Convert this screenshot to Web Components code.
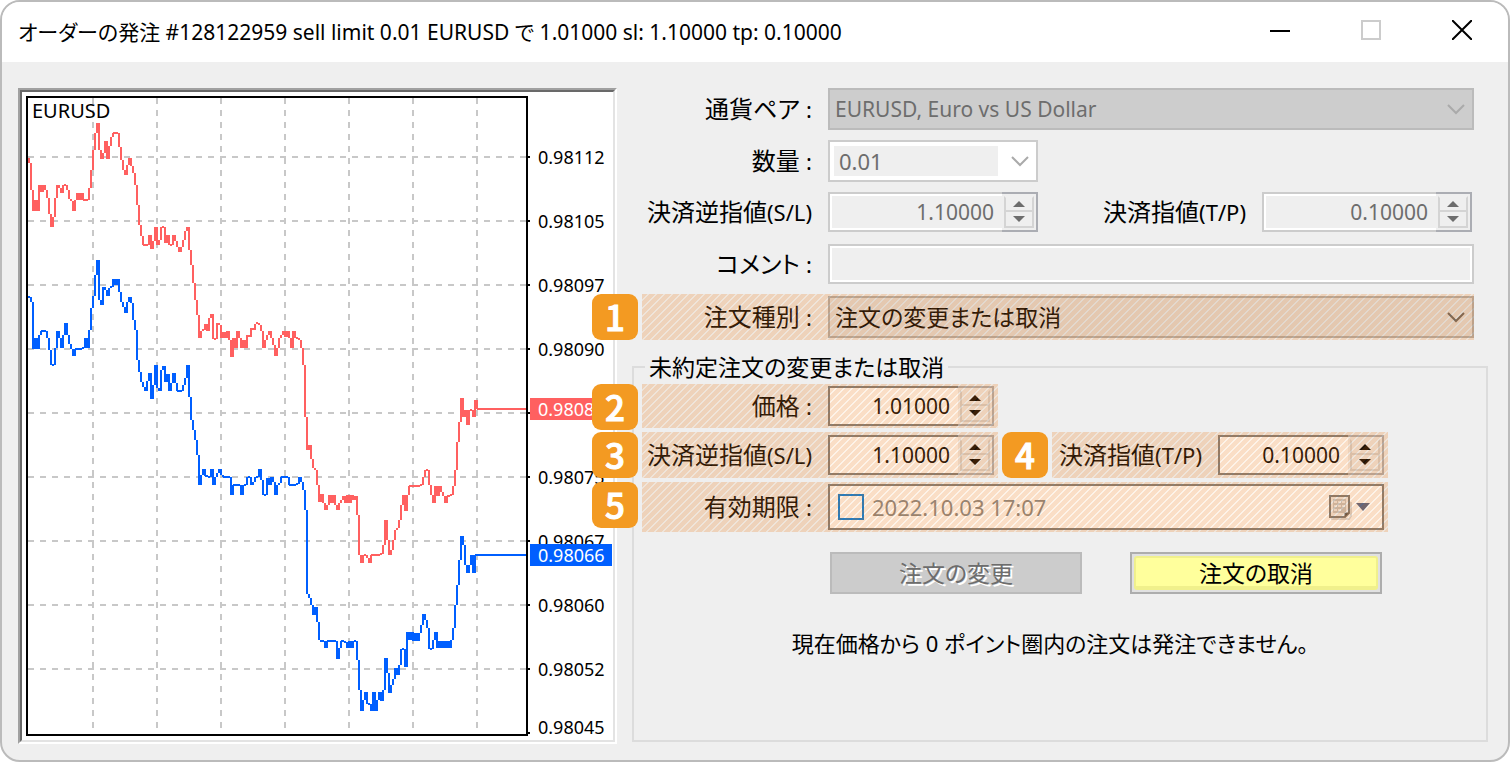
<!DOCTYPE html>
<html lang="ja">
<head>
<meta charset="utf-8">
<title>オーダーの発注</title>
<style>
  html, body { margin: 0; background: #fff; }
  body { font-family: "Noto Sans", "Noto Sans CJK JP", sans-serif; font-feature-settings: "palt"; color: #000; }
</style>
</head>
<body>
<order-window>
  <window-title slot="title">オーダーの発注 #128122959 sell limit 0.01 EURUSD で 1.01000 sl: 1.10000 tp: 0.10000</window-title>
  <price-chart slot="chart" symbol="EURUSD"></price-chart>
  <order-form slot="form"></order-form>
</order-window>

<script>
const define = (name, html, setup) => customElements.define(name, class extends HTMLElement {
  connectedCallback() {
    if (this.shadowRoot) return;
    const root = this.attachShadow({ mode: 'open' });
    root.innerHTML = typeof html === 'function' ? html(this) : html;
    if (setup) setup(this, root);
  }
});

/* ---------- window frame ---------- */
define('order-window', `
<style>
  :host { display: flex; flex-direction: column; box-sizing: border-box; min-height: 100vh;
    border: 2px solid #bbb; border-radius: 20px; background: #efefef; overflow: hidden; }
  main { display: flex; gap: 15px; padding: 26px 20px 16px 16px; flex: 1; }
  slot[name=chart] { display: contents; }
  ::slotted([slot=form]) { flex: 1; min-width: 0; }
</style>
<slot name="title"></slot>
<main><slot name="chart"></slot><slot name="form"></slot></main>`);

define('window-title', `
<style>
  :host { display: flex; align-items: center; height: 60px; background: #fff; padding: 0 1px 0 16px; }
  h1 { flex: 1; margin: 0; font-size: 21px; line-height: 32px; font-weight: 400; white-space: nowrap; }
  button { align-self: flex-start; width: 91px; height: 56px; border: 0; padding: 0; background: none; display: grid; place-items: center; }
  svg { display: block; }
</style>
<h1><slot></slot></h1>
<button aria-label="最小化"><svg width="20" height="20" shape-rendering="crispEdges"><path d="M0 11h20" stroke="#000" stroke-width="2"/></svg></button>
<button aria-label="最大化" disabled><svg width="20" height="20" shape-rendering="crispEdges"><rect x="1" y="1" width="18" height="18" fill="none" stroke="#ccc" stroke-width="2"/></svg></button>
<button aria-label="閉じる"><svg width="20" height="20"><path d="M0 0L20 20M20 0L0 20" stroke="#000" stroke-width="2"/></svg></button>`);

/* ---------- tick chart ---------- */
const ASK = `28,158 29,163 31,190 33,211 35,200 37,211 39,185 41,192 43,185 45,190 47,198 49,214 51,227 53,217 55,198 57,185 59,188 61,193 63,185 65,185 67,190 69,199 71,201 73,211 75,200 77,193 79,200 81,193 83,200 87,200 89,188 91,170 93,150 95,133 97,123 99,150 101,159 103,153 105,141 107,159 109,146 111,137 113,133 117,133 119,147 121,160 123,170 125,175 127,165 129,158 131,166 133,173 135,185 137,205 139,225 141,236 143,245 147,245 149,235 151,249 153,241 155,227 157,245 159,240 161,227 163,227 165,243 167,235 169,245 171,245 173,235 175,241 177,247 179,252 181,247 183,240 185,231 187,227 189,250 191,265 193,283 195,300 197,315 199,338 201,331 203,330 205,324 207,331 209,318 211,314 213,339 215,339 217,323 219,325 221,338 223,332 225,338 227,331 229,340 231,357 233,338 235,348 237,331 239,338 241,348 243,340 245,348 247,335 249,337 251,328 253,330 255,324 257,323 259,325 261,331 263,348 265,340 267,335 269,331 271,338 273,345 275,356 277,348 279,338 281,335 283,331 285,337 287,331 289,338 291,348 293,331 295,338 297,338 299,340 301,348 303,365 305,417 307,450 309,445 311,459 313,468 315,470 317,485 319,502 321,494 323,503 325,510 327,505 329,495 331,503 333,495 335,505 337,510 339,503 341,500 343,496 345,503 347,495 349,503 351,495 353,500 355,496 357,515 359,555 361,563 363,555 365,555 367,558 369,563 371,555 381,554 383,545 385,520 387,540 389,555 391,550 393,540 395,530 397,528 399,520 401,505 403,495 405,511 407,495 409,486 421,485 423,477 425,470 427,470 429,485 431,495 433,503 435,486 437,496 439,486 441,492 443,496 445,503 447,496 451,495 453,486 455,470 457,442 459,422 461,398 463,417 465,410 467,425 469,410 471,410 473,417 475,400 477,409 527,409`;
const BID = `28,297 31,302 33,349 35,338 37,349 39,335 41,331 45,331 47,338 49,350 51,365 53,365 55,348 57,331 59,338 61,348 63,335 65,323 67,335 69,344 71,349 73,356 75,349 83,348 85,338 87,348 89,330 91,308 93,296 95,275 97,260 99,300 101,305 103,287 105,290 107,296 109,288 111,287 113,279 115,285 117,279 119,292 121,302 123,307 125,313 127,302 129,297 131,303 133,320 135,330 137,360 139,372 141,382 143,387 145,391 147,381 149,373 151,399 153,385 155,365 157,388 159,391 161,370 163,366 165,382 167,374 169,391 171,383 173,373 175,383 177,391 181,391 183,385 185,378 187,365 189,397 191,420 193,430 195,440 197,455 199,485 201,475 203,469 205,476 209,477 211,469 213,485 215,477 217,473 219,469 221,475 223,477 229,477 231,495 233,485 239,485 241,495 243,485 245,485 247,477 249,477 251,485 253,482 255,477 257,477 259,469 261,480 263,495 265,495 267,478 269,485 271,477 273,482 275,495 277,485 279,483 281,477 287,477 289,485 297,484 299,477 301,482 303,490 305,510 307,594 309,598 311,605 313,615 315,607 317,622 319,640 321,641 323,641 325,648 327,641 335,641 337,659 339,648 341,641 345,642 347,648 349,641 351,648 353,641 355,641 357,660 359,690 361,711 363,700 365,692 367,704 369,704 371,711 373,692 375,711 377,700 379,692 381,701 383,690 385,658 387,673 389,693 391,685 393,679 395,668 397,675 399,665 401,649 403,649 405,667 407,632 409,640 411,632 413,641 415,633 417,641 419,633 421,625 423,614 425,620 427,628 429,649 431,649 433,640 435,632 437,648 439,641 441,648 443,641 445,648 447,641 449,648 451,640 453,628 455,605 457,585 459,560 461,536 463,545 465,565 467,573 469,565 471,555 473,573 475,555 527,555`;

/* One two-pixel column per tick, spanning from the previous price to this one; gaps become flat runs. */
const columns = list => {
  const p = list.split(' ').map(s => s.split(',').map(Number));
  let d = '';
  for (let i = 1; i < p.length; i++) {
    const [x0, y0] = p[i - 1], [x, y] = p[i];
    if (x - x0 > 2) d += `M${x0} ${y0}H${x - 1}`;
    d += Math.abs(y - y0) < 2 ? `M${x} ${y - 1}v2` : `M${x} ${y0}V${y}`;
  }
  return d;
};
const rows = [157, 221, 285, 349, 413, 477, 541, 605, 669];
const cols = [93, 157, 221, 285, 349, 413, 477];

define('price-chart', el => `
<style>
  :host { display: block; flex: 0 0 599px; align-self: flex-start; box-sizing: border-box; background: #fff;
    border: 2px solid; border-color: #a0a0a0 #fff #fff #a0a0a0; }
  figure { display: flex; margin: 0; height: 652px; box-sizing: border-box; padding: 4px;
    border: 2px solid; border-color: #696969 #e3e3e3 #e3e3e3 #696969; }
  svg { display: block; flex: none; }
  .axis { position: relative; flex: 1; font-size: 18px; }
  ul { margin: 0; padding: 29px 0 0 8px; list-style: none; }
  li { height: 64px; line-height: 64px; }
  li:last-child { line-height: 52px; height: 52px; margin-bottom: -20px; }
  .tag { position: absolute; left: 0; width: 74px; padding-left: 8px; height: 22px; line-height: 22px; color: #fff; }
  .ask { top: 302px; background: #ff6060; }
  .bid { top: 448px; background: #005fff; }
</style>
<figure>
  <svg width="504" height="640" viewBox="26 96 504 640" shape-rendering="crispEdges" fill="none" stroke-width="2">
    <path stroke="#c8c8c8" stroke-dasharray="6" d="${rows.map(y => `M28 ${y}H526`).join('')}${cols.map(x => `M${x} 98V734`).join('')}"/>
    <path stroke="#ff6060" d="${columns(ASK)}"/>
    <path stroke="#005fff" d="${columns(BID)}"/>
    <path stroke="#000" d="M27 97H527V735H27Z ${rows.concat(733).map(y => `M528 ${y}h2`).join('')}"/>
    <text x="32" y="118" font-size="20" fill="#000" stroke="none">${el.getAttribute('symbol')}</text>
  </svg>
  <div class="axis">
    <ul>
      <li>0.98112</li><li>0.98105</li><li>0.98097</li><li>0.98090</li><li></li><li>0.98075</li><li>0.98067</li><li>0.98060</li><li>0.98052</li><li>0.98045</li>
    </ul>
    <span class="tag ask">0.98083</span><span class="tag bid">0.98066</span>
  </div>
</figure>`);

/* ---------- numbered highlight ---------- */
define('callout-strip', el => `
<style>
  :host { display: block; position: relative; min-width: 0; --a: rgba(235,124,28,.25); --b: rgba(240,160,80,.13); }
  .shade { position: absolute; inset: 0; pointer-events: none; background-size: 8px 8px;
    background-image: linear-gradient(135deg, var(--a) 0 33%, var(--b) 35% 48%, var(--a) 50% 83%, var(--b) 85% 98%, var(--a) 100%); }
  .badge { position: absolute; left: -50px; top: 0; width: 46px; height: 46px; border-radius: 9px; background: #f39a22;
    color: #fff; font: 500 35px/44px "Noto Sans CJK JP", sans-serif; text-align: center; z-index: 1; -webkit-text-stroke: 1px #fff; }
</style>
<slot></slot><div class="shade"></div><span class="badge">${el.getAttribute('number')}</span>`);

/* ---------- fields: a label and its control ---------- */
const chevron = c => `<svg class="chev" width="18" height="11" fill="none" stroke="${c}" stroke-width="2"><path d="M1 1L9 9L17 1"/></svg>`;
const caption = el => {
  const [, main, rest] = el.getAttribute('label').match(/^([^(:]*)(.*)$/);
  return `<label for="c">${main}<span>${rest}</span></label>`;
};
const fieldCss = `
  :host { display: flex; align-items: center; height: var(--row, 42px); box-sizing: border-box; }
  label { flex: 0 0 var(--label, 170px); margin-right: 16px; text-align: right; white-space: nowrap; font-size: 24px; line-height: 32px; }
  label span { font-size: 22px; }
  .box { position: relative; display: flex; flex: 0 1 var(--w, 100%); box-sizing: border-box; min-width: 0; height: var(--h, 40px); border: 2px solid #ccc; }
  input, select { font: inherit; font-feature-settings: inherit; font-size: 21px; color: inherit; border: 0; margin: 0; border-radius: 0; outline: 0; min-width: 0; box-sizing: border-box; opacity: 1; }
  .chev { position: absolute; right: 7px; top: 14px; pointer-events: none; }
  :host([disabled]) .box { color: #6d6d6d; }`;

define('pick-field', el => `
<style>${fieldCss}
  .box { border-color: #adadad; }
  :host([disabled]) .box { border-color: #bbb; }
  select { appearance: none; width: 100%; padding: 0 32px 0 5px; background: #cdcdcd; }
  :host([tone=light]) select { background: #e1e1e1; font-size: 23px; }
  :host([tone=white]) .box { border-color: #ccc; background: #fff; padding: 4px 38px 4px 4px; }
  :host([tone=white]) select { background: #efefef; padding: 0 5px; font-size: 22px; }
</style>
${caption(el)}<div class="box"><select id="c"${el.hasAttribute('disabled') ? ' disabled' : ''}><option>${el.getAttribute('value')}</option></select>${chevron(el.getAttribute('tone') === 'light' ? '#606060' : '#aaa')}</div>`);

define('spin-field', el => {
  const off = el.hasAttribute('disabled');
  const b = off ? ' disabled' : '';
  const ink = off ? '#6d6d6d' : '#000';
  return `
<style>${fieldCss}
  .box { border-color: #7a7a7a; background: #fff; flex-shrink: 0; }
  input { flex: 1; width: 0; padding: 0 8px 0 4px; text-align: right; background: none; }
  :host([disabled]) .box { border-color: #ccc; }
  :host([disabled]) .box { padding: 2px 0 2px 2px; }
  :host([disabled]) input { background: #efefef; }
  .spin { display: grid; grid-template-rows: 1fr 1fr; box-sizing: border-box; width: 36px; margin: -2px -2px -2px 0; padding: 2px; border: 2px solid #abadb3; border-left: 0; background: #efefef; }
  :host([disabled]) .spin { margin: -4px -2px -4px 0; }
  .spin button { display: grid; place-items: center; padding: 0; border: 2px solid #d4d4d4; background: #efefef; min-height: 0; }
  .spin button:first-child { border-top-color: transparent; }
  .spin button + button { margin-top: -2px; }
  .spin svg { display: block; }
</style>
${caption(el)}<div class="box"><input id="c" type="text" inputmode="decimal" value="${el.getAttribute('value')}"${b}>
<div class="spin"><button aria-label="増やす"${b}><svg width="12" height="6"><path d="M6 0L12 6H0Z" fill="${ink}"/></svg></button><button aria-label="減らす"${b}><svg width="12" height="6"><path d="M6 6L12 0H0Z" fill="${ink}"/></svg></button></div></div>`;
});

define('text-field', el => `
<style>${fieldCss}
  .box { padding: 2px; background: #fff; }
  input { width: 100%; background: #efefef; }
</style>
${caption(el)}<div class="box"><input id="c" type="text" disabled></div>`);

define('date-field', el => `
<style>${fieldCss}
  .box { border-color: #7a7a7a; background: #fff; align-items: center; padding-left: 8px; }
  input[type=checkbox] { appearance: none; flex: none; width: 26px; height: 26px; border: 2px solid #0078d7; background: #fff; margin-right: 8px; }
  input[type=text] { flex: 1; padding: 0; color: #838383; background: none; font-size: 22px; }
  button { flex: none; display: flex; align-items: center; gap: 4px; border: 0; background: none; padding: 0 12px 0 0; }
</style>
${caption(el)}<div class="box"><input type="checkbox" aria-label="有効期限を使う"><input id="c" type="text" value="${el.getAttribute('value')}">
<button aria-label="カレンダー"><svg width="24" height="26" fill="none"><path d="M3 25H21L23 22V8" stroke="#d8d8d8" stroke-width="2"/><path d="M2 2H21V19L17 23H2Z" fill="#eee" stroke="#777" stroke-width="2"/><path d="M17 23V19H21Z" fill="#444" stroke="#666"/><rect x="5" y="5" width="13" height="14" fill="#c4c4c4"/><path d="M6 7h3v2H6zM10 7h3v2h-3zM14 7h3v2h-3zM6 11h3v2H6zM10 11h3v2h-3zM14 11h3v2h-3zM6 15h3v2H6zM10 15h3v2h-3z" fill="#eee"/></svg><svg width="14" height="8"><path d="M0 0H14L7 8Z" fill="#4a5f8a"/></svg></button></div>`);

/* ---------- buttons ---------- */
define('action-button', el => `
<style>
  :host { display: block; flex: 0 1 252px; }
  button { display: block; box-sizing: border-box; width: 100%; height: 42px; padding: 0; font: inherit; font-size: 23px; font-feature-settings: inherit;
    border: 2px solid #adadad; background: #e1e1e1; color: #000; }
  button span { display: block; margin: 2px; box-sizing: border-box; height: 34px; line-height: 30px; background: #ffff9c; border: 2px solid #f0f08c; border-bottom-width: 4px; border-radius: 3px; }
  button:disabled { border-color: #bbb; background: #ccc; color: #6d6d6d; text-shadow: 2px 2px 0 #fff; }
  button:disabled span { background: none; border-color: transparent; }
</style>
<button${el.hasAttribute('disabled') ? ' disabled' : ''}><span><slot></slot></span></button>`);

/* ---------- the form ---------- */
define('order-form', `
<style>
  :host { display: block; }
  form { display: flex; flex-direction: column; height: 654px; }
  .top { display: flex; flex-direction: column; gap: 10px; padding: 0 14px 0 10px; }
  .pair { display: flex; justify-content: space-between; }
  .top .pair { padding-right: 2px; }
  pick-field { --h: 42px; }
  pick-field[tone=white] { --w: 210px; }
  .top spin-field { --w: 210px; --row: 40px; }
  text-field { --row: 40px; margin-top: 2px; }
  .top callout-strip { --row: 46px; }
  .second { --label: 150px; }
  fieldset { flex: 1; margin: 14px 0 0; padding: 0 98px 0 8px; border: 2px solid #dcdcdc; min-width: 0; display: flex; flex-direction: column; }
  legend { margin-left: 3px; padding: 0 4px; font-size: 23px; line-height: 26px; height: 26px; }
  .rows { display: flex; flex-direction: column; gap: 4px; padding-top: 4px; }
  .rows spin-field { --w: 166px; padding-right: 4px; }
  .price { --row: 44px; align-self: flex-start; }
  .rows .pair { --row: 46px; }
  .date { --row: 50px; --h: 46px; }
  date-field { padding-right: 4px; }
  .actions { display: flex; justify-content: flex-end; gap: 48px; margin: 20px 6px 0 0; }
  p { margin: 32px 0 0; padding-left: 70px; text-align: center; font-size: 22px; line-height: 34px; white-space: nowrap; }
</style>
<form onsubmit="return false">
  <div class="top">
    <pick-field label="通貨ペア :" value="EURUSD, Euro vs US Dollar" disabled></pick-field>
    <pick-field label="数量 :" value="0.01" tone="white" disabled></pick-field>
    <div class="pair">
      <spin-field label="決済逆指値(S/L)" value="1.10000" disabled></spin-field>
      <spin-field class="second" label="決済指値(T/P)" value="0.10000" disabled></spin-field>
    </div>
    <text-field label="コメント :"></text-field>
    <callout-strip number="1"><pick-field label="注文種別 :" value="注文の変更または取消" tone="light"></pick-field></callout-strip>
  </div>
  <fieldset>
    <legend>未約定注文の変更または取消</legend>
    <div class="rows">
      <callout-strip class="price" number="2"><spin-field label="価格 :" value="1.01000"></spin-field></callout-strip>
      <div class="pair">
        <callout-strip number="3"><spin-field label="決済逆指値(S/L)" value="1.10000"></spin-field></callout-strip>
        <callout-strip number="4"><spin-field class="second" label="決済指値(T/P)" value="0.10000"></spin-field></callout-strip>
      </div>
      <callout-strip class="date" number="5"><date-field label="有効期限 :" value="2022.10.03 17:07"></date-field></callout-strip>
    </div>
    <div class="actions"><action-button disabled>注文の変更</action-button><action-button>注文の取消</action-button></div>
    <p>現在価格から 0 ポイント圏内の注文は発注できません。</p>
  </fieldset>
</form>`);
</script>
</body>
</html>
